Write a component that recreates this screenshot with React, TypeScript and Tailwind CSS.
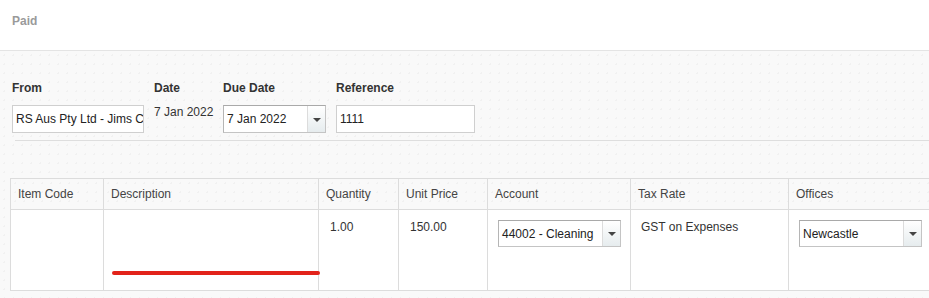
import React from "react";

const dotted =
  "bg-[#f9f9f9] bg-[radial-gradient(#f1f1f1_1px,transparent_1px)] bg-[length:9px_9px]";

function Select({ value, width, height }: { value: string; width: string; height: string }) {
  return (
    <div
      className={`${width} ${height} flex bg-white border border-[#c4c4c4] border-t-[#a9a9a9] border-l-[#b5b5b5]`}
    >
      <div className="flex-1 flex items-center pl-[3px] text-[12px] text-[#222] overflow-hidden whitespace-nowrap">
        {value}
      </div>
      <div className="w-[18px] flex items-center justify-center border-l border-[#dcdcdc] bg-gradient-to-b from-white to-[#e6ecee]">
        <div className="w-0 h-0 border-l-[4px] border-r-[4px] border-t-[4px] border-l-transparent border-r-transparent border-t-[#444] mt-[1px]" />
      </div>
    </div>
  );
}

export default function App() {
  return (
    <div className="w-[929px] h-[298px] overflow-hidden bg-white text-[#333] font-['Liberation_Sans',Arial,sans-serif]">
      {/* Status bar */}
      <div className="h-[50px] pl-3 pt-[13px] text-[12px] leading-4 font-bold text-[#9a9a9a]">Paid</div>

      <div className={`border-t border-[#e4e4e4] h-[248px] ${dotted}`}>
        {/* Header fields */}
        <div className="flex pl-3 pt-[29px]">
          <div className="w-[142px]">
            <div className="text-[12px] leading-4 font-bold mb-[9px]">From</div>
            <input
              readOnly
              value="RS Aus Pty Ltd - Jims Cleaning"
              className="w-[132px] h-[28px] pl-[3px] bg-white border border-[#cfcfcf] text-[12px] text-[#222] outline-none"
            />
          </div>
          <div className="w-[69px]">
            <div className="text-[12px] leading-4 font-bold mb-[9px]">Date</div>
            <div className="text-[12px] leading-4 text-[#333] -mt-[1px]">7 Jan 2022</div>
          </div>
          <div className="w-[113px]">
            <div className="text-[12px] leading-4 font-bold mb-[9px]">Due Date</div>
            <Select value="7 Jan 2022" width="w-[103px]" height="h-[28px]" />
          </div>
          <div className="w-[139px]">
            <div className="text-[12px] leading-4 font-bold mb-[9px]">Reference</div>
            <input
              readOnly
              value="1111"
              className="w-[139px] h-[28px] pl-[3px] bg-white border border-[#cfcfcf] text-[12px] text-[#222] outline-none"
            />
          </div>
        </div>

        <div className="ml-[15px] mt-[7px] border-t border-[#dedede]" />

        {/* Line items */}
        <div className="ml-[10px] mt-[37px] w-[1000px] grid grid-cols-[93px_215px_80px_89px_143px_158px_222px] border-l border-t border-[#dcdcdc] text-[12px]">
          {["Item Code", "Description", "Quantity", "Unit Price", "Account", "Tax Rate", "Offices"].map((h) => (
            <div
              key={h}
              className={`h-[31px] flex items-center pl-[7px] border-r border-b border-[#dcdcdc] text-[#444] ${dotted}`}
            >
              {h}
            </div>
          ))}

          <div className="h-[81px] bg-white border-r border-b border-[#dcdcdc]" />
          <div className="h-[81px] bg-white border-r border-b border-[#dcdcdc] relative">
            <div className="absolute left-[8px] top-[61px] w-[208px] h-[4px] rounded-full bg-[#e2231a]" />
          </div>
          <div className="h-[81px] bg-white border-r border-b border-[#dcdcdc] pl-[11px] pt-[9px] leading-4 text-[#333]">
            1.00
          </div>
          <div className="h-[81px] bg-white border-r border-b border-[#dcdcdc] pl-[11px] pt-[9px] leading-4 text-[#333]">
            150.00
          </div>
          <div className="h-[81px] bg-white border-r border-b border-[#dcdcdc] pl-[10px] pt-[10px]">
            <Select value="44002 - Cleaning" width="w-[123px]" height="h-[27px]" />
          </div>
          <div className="h-[81px] bg-white border-r border-b border-[#dcdcdc] pl-[10px] pt-[9px] leading-4 text-[#333]">
            GST on Expenses
          </div>
          <div className="h-[81px] bg-white border-r border-b border-[#dcdcdc] pl-[10px] pt-[10px]">
            <Select value="Newcastle" width="w-[123px]" height="h-[27px]" />
          </div>
        </div>
      </div>
    </div>
  );
}
